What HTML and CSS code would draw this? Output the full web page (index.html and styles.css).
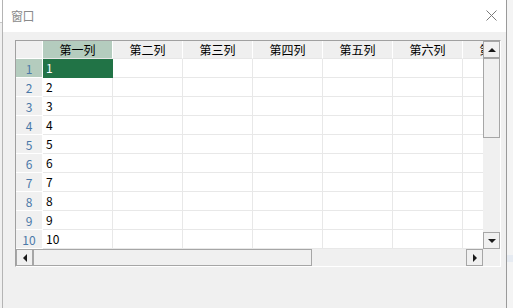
FILE: index.html
```html
<!DOCTYPE html>
<html>
<head>
<meta charset="utf-8">
<link rel="stylesheet" href="styles.css">
</head>
<body>
<div class="side-left"></div>
<div class="window">
  <div class="titlebar">
    <span class="title">窗口</span>
    <svg class="close" width="11" height="11" viewBox="0 0 11 11"><path d="M0.5 0.5 L10.5 10.5 M10.5 0.5 L0.5 10.5" stroke="#7a7a7a" stroke-width="1" fill="none"/></svg>
  </div>
  <div class="client">
    <div class="grid">
      <div class="sheet">
        <div class="row head">
          <div class="rh corner"></div>
          <div class="ch sel">第一列</div>
          <div class="ch">第二列</div>
          <div class="ch">第三列</div>
          <div class="ch">第四列</div>
          <div class="ch">第五列</div>
          <div class="ch">第六列</div>
          <div class="ch">第七列</div>
        </div>
        <div class="row"><div class="rh sel">1</div><div class="c active">1</div><div class="c"></div><div class="c"></div><div class="c"></div><div class="c"></div><div class="c"></div><div class="c"></div></div>
        <div class="row"><div class="rh">2</div><div class="c">2</div><div class="c"></div><div class="c"></div><div class="c"></div><div class="c"></div><div class="c"></div><div class="c"></div></div>
        <div class="row"><div class="rh">3</div><div class="c">3</div><div class="c"></div><div class="c"></div><div class="c"></div><div class="c"></div><div class="c"></div><div class="c"></div></div>
        <div class="row"><div class="rh">4</div><div class="c">4</div><div class="c"></div><div class="c"></div><div class="c"></div><div class="c"></div><div class="c"></div><div class="c"></div></div>
        <div class="row"><div class="rh">5</div><div class="c">5</div><div class="c"></div><div class="c"></div><div class="c"></div><div class="c"></div><div class="c"></div><div class="c"></div></div>
        <div class="row"><div class="rh">6</div><div class="c">6</div><div class="c"></div><div class="c"></div><div class="c"></div><div class="c"></div><div class="c"></div><div class="c"></div></div>
        <div class="row"><div class="rh">7</div><div class="c">7</div><div class="c"></div><div class="c"></div><div class="c"></div><div class="c"></div><div class="c"></div><div class="c"></div></div>
        <div class="row"><div class="rh">8</div><div class="c">8</div><div class="c"></div><div class="c"></div><div class="c"></div><div class="c"></div><div class="c"></div><div class="c"></div></div>
        <div class="row"><div class="rh">9</div><div class="c">9</div><div class="c"></div><div class="c"></div><div class="c"></div><div class="c"></div><div class="c"></div><div class="c"></div></div>
        <div class="row"><div class="rh">10</div><div class="c">10</div><div class="c"></div><div class="c"></div><div class="c"></div><div class="c"></div><div class="c"></div><div class="c"></div></div>
      </div>
      <div class="vscroll">
        <div class="btn"><span class="tri up"></span></div>
        <div class="vthumb"></div>
        <div class="fill"></div>
        <div class="btn"><span class="tri down"></span></div>
      </div>
      <div class="hscroll">
        <div class="btn"><span class="tri left"></span></div>
        <div class="hthumb"></div>
        <div class="fill"></div>
        <div class="btn"><span class="tri right"></span></div>
      </div>
      <div class="sc-corner"></div>
    </div>
  </div>
</div>
<div class="side-right"></div>
</body>
</html>
```
FILE: styles.css
```css
html, body {
  margin: 0;
  padding: 0;
}
body {
  display: flex;
  width: 513px;
  height: 308px;
  overflow: hidden;
  background: #f2f2f2;
  font-family: "Noto Sans CJK SC", "Liberation Sans", sans-serif;
  font-size: 12px;
  color: #000;
}
.side-left {
  width: 2px;
  flex: none;
  background: linear-gradient(#ffffff 0, #ffffff 22px, #c8c8c8 22px, #c8c8c8 23px, #f0f0f0 23px);
}
.side-right {
  flex: 1;
  background: linear-gradient(#f4f4f4 0, #f4f4f4 255px, #e6ebf2 255px, #e6ebf2 262px, #f4f4f4 262px);
}
.window {
  width: 503px;
  flex: none;
  display: flex;
  flex-direction: column;
  border-left: 1px solid #b4b4b4;
  border-right: 1px solid #9a9a9a;
  background: #f0f0f0;
}
.titlebar {
  height: 32px;
  flex: none;
  background: #fff;
  display: flex;
  align-items: center;
  justify-content: space-between;
  padding: 0 9px 0 8px;
  box-sizing: border-box;
}
.title {
  color: #8a8a8a;
  font-size: 12px;
  letter-spacing: -0.5px;
  margin-top: -2px;
}
.close {
  display: block;
  margin-top: -1px;
}
.client {
  flex: 1;
  padding: 8px 0 0 12px;
}
.grid {
  width: 486px;
  height: 227px;
  box-sizing: border-box;
  border-top: 1px solid #a0a0a0;
  border-left: 1px solid #a0a0a0;
  border-bottom: 1px solid #ffffff;
  border-right: 1px solid #ffffff;
  display: grid;
  grid-template-columns: 467px 17px;
  grid-template-rows: 208px 17px;
  background: #f0f0f0;
}
.sheet {
  overflow: hidden;
  background: #fff;
}
.row {
  display: flex;
  height: 19px;
  white-space: nowrap;
}
.row.head {
  height: 18px;
}
.rh {
  width: 27px;
  flex: none;
  box-sizing: border-box;
  background: #f0f0f0;
  color: #4a78a8;
  text-align: center;
  line-height: 19px;
  border-right: 1px solid #ffffff;
  border-bottom: 1px solid #ffffff;
}
.rh.corner {
  line-height: 18px;
}
.rh.sel {
  background: #b4ccbe;
}
.ch {
  width: 70px;
  flex: none;
  box-sizing: border-box;
  background: #efefef;
  text-align: center;
  line-height: 18px;
  border-right: 1px solid #ffffff;
  border-bottom: 1px solid #e6e6e6;
  overflow: hidden;
}
.ch.sel {
  background: #b4ccbe;
}
.c {
  width: 70px;
  flex: none;
  box-sizing: border-box;
  padding-left: 3px;
  line-height: 18px;
  border-right: 1px solid #e8e8e8;
  border-bottom: 1px solid #e8e8e8;
}
.c.active {
  background: #217346;
  color: #fff;
  border-color: #217346;
}
.vscroll {
  display: flex;
  flex-direction: column;
  background: #f0f0f0;
}
.hscroll {
  display: flex;
  background: #f0f0f0;
}
.sc-corner {
  background: #f0f0f0;
}
.btn {
  width: 17px;
  height: 17px;
  flex: none;
  box-sizing: border-box;
  border: 1px solid #a6a6a6;
  background: #f0f0f0;
  display: flex;
  align-items: center;
  justify-content: center;
}
.vthumb {
  height: 80px;
  flex: none;
  box-sizing: border-box;
  border: 1px solid #a6a6a6;
  background: #f0f0f0;
}
.hthumb {
  width: 279px;
  flex: none;
  box-sizing: border-box;
  border: 1px solid #a6a6a6;
  background: #f0f0f0;
}
.fill {
  flex: 1;
}
.tri {
  width: 0;
  height: 0;
  display: block;
}
.tri.up {
  border-left: 4px solid transparent;
  border-right: 4px solid transparent;
  border-bottom: 4px solid #1a1a1a;
}
.tri.down {
  border-left: 4px solid transparent;
  border-right: 4px solid transparent;
  border-top: 4px solid #1a1a1a;
}
.tri.left {
  border-top: 4px solid transparent;
  border-bottom: 4px solid transparent;
  border-right: 4px solid #1a1a1a;
}
.tri.right {
  border-top: 4px solid transparent;
  border-bottom: 4px solid transparent;
  border-left: 4px solid #1a1a1a;
}
```
